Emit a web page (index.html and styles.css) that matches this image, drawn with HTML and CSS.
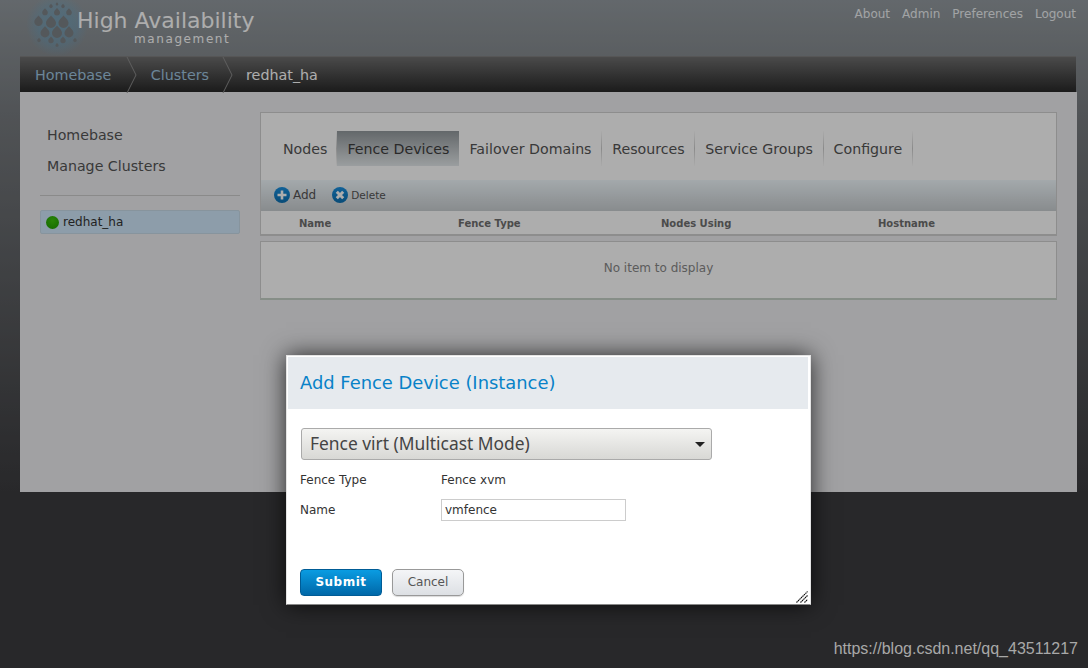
FILE: index.html
```html
<!DOCTYPE html>
<html lang="en">
<head>
<meta charset="utf-8">
<title>High Availability management</title>
<link rel="stylesheet" href="styles.css">
</head>
<body>
<svg class="defs" width="0" height="0" aria-hidden="true">
  <defs>
    <radialGradient id="glow" cx="50%" cy="50%" r="50%">
      <stop offset="0" stop-color="#5fa8d0" stop-opacity=".5"/>
      <stop offset=".6" stop-color="#5fa8d0" stop-opacity=".34"/>
      <stop offset="1" stop-color="#5fa8d0" stop-opacity="0"/>
    </radialGradient>
    <linearGradient id="iconblue" x1="0" y1="0" x2="0" y2="1">
      <stop offset="0" stop-color="#1a90e0"/>
      <stop offset="1" stop-color="#0d70b0"/>
    </linearGradient>
    <path id="drop" d="M0-1.300C.4-.8 1-.4 1 .2A1 1 0 0 1-1 .2C-1-.4-.4-.8 0-1.300z"/>
  </defs>
</svg>
<header class="topbar">
  <div class="brand">
    <svg class="brand-logo" width="80" height="56" viewBox="0 0 80 56" aria-hidden="true">
      <circle cx="37" cy="25" r="31" fill="url(#glow)"/>
      <g fill="#7d8286">
        <use href="#drop" transform="translate(37 4) scale(1.300)"/>
        <use href="#drop" transform="translate(31 6) scale(1.800)"/>
        <use href="#drop" transform="translate(43 6) scale(1.800)"/>
        <use href="#drop" transform="translate(25 12) scale(2.800)"/>
        <use href="#drop" transform="translate(37 12) scale(3)"/>
        <use href="#drop" transform="translate(49 12) scale(2.800)"/>
        <use href="#drop" transform="translate(18.500 21) scale(4.200)"/>
        <use href="#drop" transform="translate(31 22) scale(5)"/>
        <use href="#drop" transform="translate(43.500 22) scale(5)"/>
        <use href="#drop" transform="translate(25 32) scale(4.500)"/>
        <use href="#drop" transform="translate(37 32) scale(5)"/>
        <use href="#drop" transform="translate(49 32) scale(4.500)"/>
        <use href="#drop" transform="translate(31 40) scale(2.700)"/>
        <use href="#drop" transform="translate(43 40) scale(2.700)"/>
        <use href="#drop" transform="translate(19 40) scale(1.800)"/>
        <use href="#drop" transform="translate(55 40) scale(1.800)"/>
        <use href="#drop" transform="translate(37 45) scale(1.600)"/>
      </g>
    </svg>
    <div class="brand-text">
      <div class="brand-title">High Availability</div>
      <div class="brand-sub">management</div>
    </div>
  </div>
  <nav class="usernav">
    <a>About</a><a>Admin</a><a>Preferences</a><a>Logout</a>
  </nav>
</header>

<nav class="crumbs">
  <a class="crumb">Homebase</a>
  <svg class="chev" width="12" height="36" viewBox="0 0 12 36" aria-hidden="true"><path d="M1 0l9 18-9 18" fill="none" stroke="#8d8d8d"/></svg>
  <a class="crumb">Clusters</a>
  <svg class="chev" width="12" height="36" viewBox="0 0 12 36" aria-hidden="true"><path d="M1 0l9 18-9 18" fill="none" stroke="#8d8d8d"/></svg>
  <span class="crumb crumb-current">redhat_ha</span>
</nav>

<main class="content">
  <aside class="side">
    <ul class="side-menu">
      <li>Homebase</li>
      <li>Manage Clusters</li>
    </ul>
    <div class="cluster"><span class="dot"></span>redhat_ha</div>
  </aside>
  <section class="main">
    <div class="panel">
      <div class="tabs">
        <a class="tab">Nodes</a>
        <a class="tab tab-active">Fence Devices</a>
        <a class="tab">Failover Domains</a>
        <a class="tab">Resources</a>
        <a class="tab">Service Groups</a>
        <a class="tab">Configure</a>
      </div>
      <div class="toolbar">
        <a class="tool tool-add">
          <svg width="16" height="16" viewBox="0 0 16 16" aria-hidden="true"><circle cx="8" cy="8" r="8" fill="url(#iconblue)"/><path d="M8 3.500v9M3.500 8h9" stroke="#fff" stroke-width="2.600"/></svg>
          Add
        </a>
        <a class="tool tool-del">
          <svg width="16" height="16" viewBox="0 0 16 16" aria-hidden="true"><circle cx="8" cy="8" r="8" fill="url(#iconblue)"/><path d="M4.800 4.800l6.400 6.400M11.200 4.800l-6.400 6.400" stroke="#fff" stroke-width="3"/></svg>
          Delete
        </a>
      </div>
      <div class="thead">
        <span>Name</span><span>Fence Type</span><span>Nodes Using</span><span>Hostname</span>
      </div>
    </div>
    <div class="empty">No item to display</div>
  </section>
</main>

<div class="overlay"></div>

<div class="modal">
  <h2 class="modal-title">Add Fence Device (Instance)</h2>
  <div class="modal-body">
    <div class="select">Fence virt (Multicast Mode)<span class="caret"></span></div>
    <div class="field"><span class="field-label">Fence Type</span><span>Fence xvm</span></div>
    <div class="field"><span class="field-label">Name</span><input class="input" type="text" value="vmfence"></div>
  </div>
  <div class="modal-actions">
    <button class="btn btn-primary" type="button">Submit</button>
    <button class="btn btn-default" type="button">Cancel</button>
  </div>
  <svg class="grip" width="12" height="12" viewBox="0 0 12 12" aria-hidden="true"><path d="M0.500 11.500L11.500 0.500M4.500 11.500L11.500 4.500M8.500 11.500L11.500 8.500" stroke="#000" stroke-width="1.100" stroke-dasharray="1.500 .6" fill="none"/></svg>
</div>

<div class="watermark">https://blog.csdn.net/qq_43511217</div>
</body>
</html>
```
FILE: styles.css
```css
* { box-sizing: border-box; }
html, body { margin: 0; height: 100%; overflow: hidden; }
body {
  position: relative;
  font-family: "DejaVu Sans", sans-serif;
  background: #3c3c3f linear-gradient(180deg, #939a9f 0, #787c80 110px, #4a4b4e 400px, #3c3c3f 492px);
  color: #555;
}
a { text-decoration: none; }
ul { list-style: none; margin: 0; padding: 0; }
.defs { position: absolute; }

.topbar { height: 56px; display: flex; justify-content: space-between; }
.brand { display: flex; padding-left: 20px; }
.brand-logo { display: block; }
.brand-text { margin-left: -23px; padding-top: 7px; }
.brand-title { font-size: 22px; line-height: 27px; color: #fff; }
.brand-sub { font-size: 12px; line-height: 10px; color: #fff; letter-spacing: 1.600px; padding-left: 57px; }
.usernav { display: flex; gap: 12px; padding: 7px 12px 0 0; font-size: 12px; line-height: 15px; }
.usernav a { color: #eef1f3; }

.crumbs {
  display: flex; align-items: center; height: 36px; margin: 0 12px 0 20px;
  background: linear-gradient(180deg, #6e6e6e, #292929);
  border-top: 1px solid #7f7f7f;
  font-size: 14.300px;
}
.crumb { color: #a0c6e0; padding: 1px 13px 0 12.500px; }
.crumb:first-child { padding-left: 15px; padding-right: 15px; }
.chev { display: block; flex: none; }
.crumb-current { color: #fff; padding-left: 12px; }

.content {
  display: flex; gap: 20px; height: 400px; margin: 0 11px 0 20px; padding: 20px;
  background: #edeef1;
}
.side { width: 200px; flex: none; }
.side-menu { padding: 8px 7px 0; border-bottom: 1px solid #ccc; font-size: 14.200px; color: #555; height: 84px; }
.side-menu li { line-height: 31px; height: 31px; }
.cluster {
  display: flex; align-items: center; height: 24px; margin-top: 14px; padding-left: 5px;
  background: #d0e8fb; border: 1px solid #c8dbe8; border-radius: 2px;
  font-size: 12px; color: #333;
}
.dot { width: 13px; height: 13px; margin-right: 4px; border-radius: 50%; background: radial-gradient(circle at 50% 35%, #3dc40c, #1d9a00); }

.main { flex: 1; min-width: 0; }
.panel { border: 1px solid #d0d0d0; background: #fff; }
.tabs { display: flex; height: 67px; padding: 18px 0 0 12px; }
.tab {
  height: 35px; padding: 1px 9.700px 0 10px; font-size: 14.200px; line-height: 35px; color: #555;
  border-right: 1px solid transparent;
  border-image: linear-gradient(180deg, #fff, #ccc 50%, #fff) 1;
}
.tab:nth-child(1) { padding-right: 9px; }
.tab-active { background: linear-gradient(180deg, #93999d, #e4e9eb); color: #3e3e3e; border-right: 0; border-image: none; padding-right: 10px; }
.toolbar {
  display: flex; align-items: center; gap: 16px; height: 31px; padding: 0 0 1px 13px;
  background: linear-gradient(180deg, #f1f9fd, #c9ced1);
}
.tool { display: flex; align-items: center; color: #555; gap: 3px; }
.tool-add { font-size: 12px; }
.tool-del { font-size: 10.500px; }
.thead {
  display: grid; grid-template-columns: 159px 203px 217px 1fr; height: 24px; padding-left: 38px;
  border-bottom: 1px solid #d0d0d0;
  font-size: 10px; font-weight: bold; line-height: 25px; color: #6f6f6f;
}
.empty {
  margin-top: 5px; height: 59px; border: 1px solid #d0d0d0; border-bottom: 2px solid #c6d2c8; background: #fff;
  text-align: center; font-size: 12px; line-height: 52px; color: #888;
}

.overlay { position: absolute; inset: 0; background: rgba(0, 0, 0, .32); }

.modal {
  position: absolute; left: 286px; top: 355px; width: 525px; height: 250px;
  padding: 1px 2px 0 1px; background: #fff; border: 1px solid #e4e4e4; border-bottom-color: #888;
  box-shadow: 0 0 22px rgba(0, 0, 0, .75);
  display: flex; flex-direction: column;
  color: #333;
}
.modal-title {
  margin: 0; height: 52px; padding-left: 12px;
  background: #e6eaee; color: #0882c8;
  font-size: 17.900px; font-weight: normal; line-height: 52px;
}
.modal-body { flex: 1; padding: 19px 12px 0 12px; font-size: 12px; }
.select {
  position: relative; width: 411px; height: 32px; margin: 0 0 5px 1px; padding-left: 8px;
  background: linear-gradient(180deg, #f4f4f2, #d8d8d5); border: 1px solid #aaa; border-radius: 3px;
  font-family: "Noto Sans", sans-serif; font-size: 17.400px; line-height: 29px; color: #444;
}
.caret { position: absolute; right: 6px; top: 13px; border: 5px solid transparent; border-top: 5px solid #222; border-bottom: 0; }
.field { display: flex; align-items: center; height: 30px; }
.field-label { width: 141px; flex: none; }
.input {
  width: 185px; height: 22px; padding: 0 3px; border: 1px solid #ccc; background: #fff;
  font: 12px "DejaVu Sans", sans-serif; color: #333;
}
.modal-actions { display: flex; gap: 10px; padding: 0 0 8px 12px; }
.btn { height: 27px; padding: 0 0 1px; font-family: "DejaVu Sans", sans-serif; font-size: 12px; border-radius: 4px; }
.btn-primary {
  width: 82px; background: linear-gradient(180deg, #0a9ce2, #0068a8); border: 1px solid #005c96;
  color: #fff; font-weight: bold; letter-spacing: .5px;
}
.btn-default {
  width: 72px; background: linear-gradient(180deg, #f4f5f7, #dde0e4); border: 1px solid #999;
  color: #555; border-radius: 5px; box-shadow: 0 1px 1px rgba(0, 0, 0, .15);
}
.grip { position: absolute; right: 2px; bottom: 1px; }

.watermark {
  position: absolute; right: 10px; top: 640px;
  font-family: "Liberation Sans", sans-serif; font-size: 16px; line-height: 18px; color: #a8a8a8;
}
```
